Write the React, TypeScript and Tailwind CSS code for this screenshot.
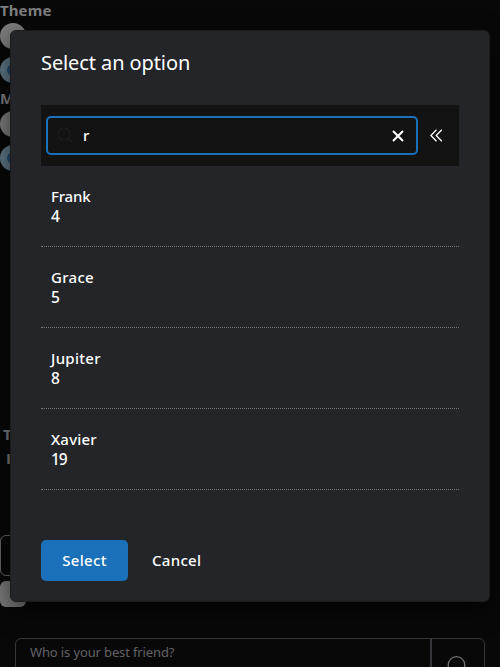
import React from "react";

const rows = [
  { name: "Frank", id: 4, nameClass: "tracking-[-0.2px]" },
  { name: "Grace", id: 5, nameClass: "tracking-[0.3px]" },
  { name: "Jupiter", id: 8, nameClass: "tracking-[0.3px]" },
  { name: "Xavier", id: 19, nameClass: "tracking-[0.2px]" },
];

function Toggle({ on = false }: { on?: boolean }) {
  return on ? (
    <div className="flex size-[26px] shrink-0 items-center justify-center rounded-full bg-[#5e7784]">
      <div className="size-3 rounded-full bg-[#214e70]" />
    </div>
  ) : (
    <div className="size-[26px] shrink-0 rounded-full bg-[#7c7c7c]" />
  );
}

function PageBehind() {
  return (
    <div className="flex h-full flex-col text-[#7d7d7f]">
      <div className="h-[23px] shrink-0 text-[15px] leading-[21px] font-bold tracking-[0.1px]">Theme</div>
      <Toggle />
      <div className="mt-2 shrink-0"><Toggle on /></div>
      <div className="h-[28px] shrink-0 pt-[5px] text-[15px] leading-[21px] font-bold">Mode</div>
      <Toggle />
      <div className="mt-2 shrink-0"><Toggle on /></div>
      <div className="mt-[251px] h-6 shrink-0 pl-[3px] text-[15px] leading-[24px] font-bold">Title</div>
      <div className="h-6 shrink-0 pl-[6px] font-['Open_Sans',sans-serif] text-[15px] leading-[24px] font-bold">Input</div>
      <div className="mt-[65px] h-[41px] w-20 shrink-0 rounded-md border border-[#66676a]" />
      <div className="mt-[5px] h-[26px] w-[26px] shrink-0 rounded-md bg-[#7b7b7b]" />
      <div className="mt-[31px] ml-[15px] flex h-[48px] w-[470px] shrink-0 rounded-md border border-[#36363a]">
        <div className="w-[414px] pl-[14px] text-[13px] leading-[27px] tracking-[-0.13px] text-[#626265]">
          Who is your best friend?
        </div>
        <div className="flex flex-1 justify-center border-l-2 border-[#36363a] pt-[17px]">
          <svg width="24" height="24" viewBox="0 0 24 24" fill="none" stroke="#747477" strokeWidth="1.3">
            <circle cx="10.5" cy="9" r="8.3" />
            <path d="m16.5 15 5 5" />
          </svg>
        </div>
      </div>
    </div>
  );
}

export default function App() {
  return (
    <div className="relative h-[667px] w-[500px] overflow-hidden bg-[#080808] font-['Noto_Sans',sans-serif]">
      <PageBehind />
      <div className="absolute top-[30px] left-[10px] flex h-[572px] w-[480px] flex-col rounded-md border border-[#1b1c1e] bg-[#242529] px-[30px] text-white shadow-[0_8px_24px_rgba(0,0,0,0.6)]">
        <h1 className="h-[74px] pt-[18px] text-[20px] leading-[28px] tracking-[-0.1px]">Select an option</h1>
        <div className="flex h-[61px] shrink-0 items-center bg-[#131313] pl-[5px]">
          <div className="flex h-[39px] w-[372px] items-center rounded-[5px] border-2 border-[#1a70b9] pr-3 pl-[9px]">
            <svg width="18" height="18" viewBox="0 0 18 18" fill="none" stroke="#1e1e1f" strokeWidth="1.2">
              <circle cx="7" cy="7" r="6" />
              <path d="m11.5 11.5 4 4" />
            </svg>
            <span className="-mt-0.5 ml-[8px] flex-1 text-[15px] leading-5 font-medium">r</span>
            <svg width="12" height="12" viewBox="0 0 12 12" fill="none" stroke="currentColor" strokeWidth="2">
              <path d="m1 1 10 10M11 1 1 11" />
            </svg>
          </div>
          <svg className="ml-[12px]" width="13" height="13" viewBox="0 0 13 13" fill="none" stroke="currentColor" strokeWidth="1.3">
            <path d="M6.5.8.9 6.5l5.6 5.7M11.8.8 6.2 6.5l5.6 5.7" />
          </svg>
        </div>
        <ul>
          {rows.map((row) => (
            <li key={row.id} className="h-[81px] border-b border-dotted border-[#77787b] px-[10px] pt-[20px] text-[15px] leading-5 font-medium">
              <div className={row.nameClass}>{row.name}</div>
              <div className="text-[15.5px] leading-[21px] tracking-[-1.2px]">{row.id}</div>
            </li>
          ))}
        </ul>
        <div className="mt-[50px] flex h-[41px] items-center text-[15px] font-medium tracking-[0.3px]">
          <button className="h-[41px] w-[87px] rounded-[5px] bg-[#1a70b9]">Select</button>
          <button className="ml-6">Cancel</button>
        </div>
      </div>
    </div>
  );
}
